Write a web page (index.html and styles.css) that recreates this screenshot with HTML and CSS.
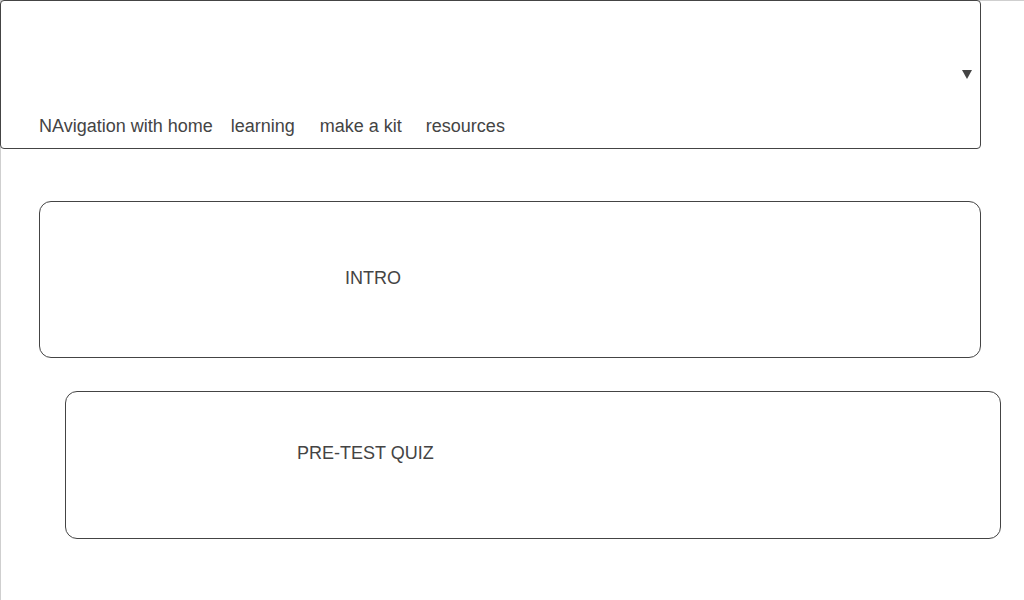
FILE: index.html
```html
<!DOCTYPE html>
<html lang="en">
<head>
<meta charset="utf-8">
<title>Navigation</title>
<link rel="stylesheet" href="styles.css">
</head>
<body>
<div class="page">
  <header class="header">
    <div class="arrow-row">
      <svg class="arrow" width="10" height="9" viewBox="0 0 10 9" aria-hidden="true"><polygon points="0,0 10,0 5,9" fill="#444"/></svg>
    </div>
    <nav class="nav">
      <span class="brand">NAvigation with home</span>
      <div class="links">
        <a class="link" href="#">learning</a>
        <a class="link" href="#">make a kit</a>
        <a class="link" href="#">resources</a>
      </div>
    </nav>
  </header>
  <main class="main">
    <section class="card card-intro"><span class="card-label">INTRO</span></section>
    <section class="card card-quiz"><span class="card-label">PRE-TEST QUIZ</span></section>
  </main>
</div>
</body>
</html>
```
FILE: styles.css
```css
* { box-sizing: border-box; }
html, body { margin: 0; padding: 0; background: #fff; }
body {
  font-family: "Liberation Sans", Arial, sans-serif;
  font-size: 18px;
  line-height: 20px;
  color: #444;
  overflow: hidden;
}
.page {
  border-top: 1px solid #cfcfcf;
  border-left: 1px solid #cfcfcf;
  min-height: 100vh;
}
.header {
  margin: -1px 0 0 -1px;
  width: 981px;
  height: 149px;
  border: 1px solid #444;
  border-radius: 4px;
  padding: 69px 0 12px 38px;
  display: flex;
  flex-direction: column;
  background: #fff;
}
.arrow-row {
  display: flex;
  justify-content: flex-end;
  padding-right: 8px;
  height: 9px;
}
.arrow { display: block; }
.nav {
  margin-top: 37px;
  display: flex;
  height: 20px;
  white-space: nowrap;
}
.brand { margin-right: 18px; }
.links { display: flex; gap: 25px; }
.link { color: #444; text-decoration: none; }
.link:last-child { margin-left: -1px; }
.main {
  display: flex;
  flex-direction: column;
  align-items: flex-start;
}
.card {
  border: 1px solid #444;
  border-radius: 12px;
  white-space: nowrap;
}
.card-intro {
  margin: 52px 0 0 38px;
  width: 942px;
  height: 157px;
  padding: 66px 0 0 305px;
}
.card-quiz {
  margin: 33px 0 0 64px;
  width: 936px;
  height: 148px;
  padding: 51px 0 0 231px;
}
.card-label { display: block; }
```
